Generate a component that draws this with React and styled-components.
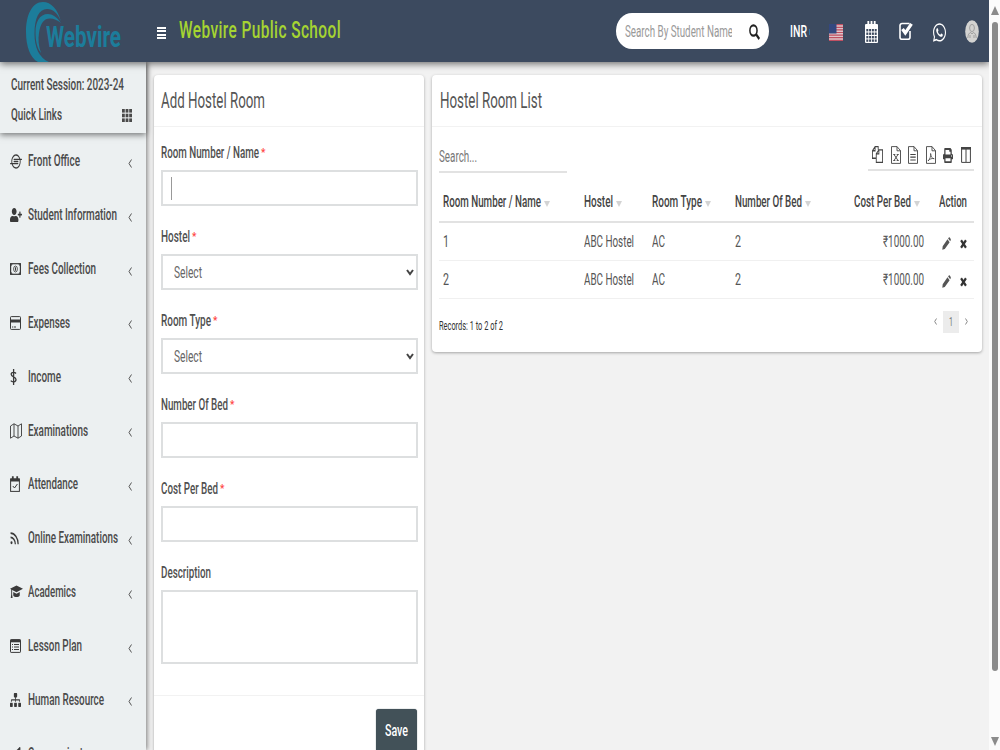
import React, { useLayoutEffect, useRef, useState } from "react";
import styled, { createGlobalStyle } from "styled-components";
import {
  FaIoxhost, FaUserPlus, FaSitemap, FaBullhorn, FaWhatsapp, FaPrint,
} from "react-icons/fa";

const GlobalStyle = createGlobalStyle`
  * { box-sizing: border-box; }
  html, body { margin: 0; overflow: hidden; background: #f2f2f2; }
  body { font-family: Roboto, "Liberation Sans", sans-serif; font-size: 16px; line-height: 20px; color: #444; }
`;

/* Text condensed to a given width */
const FitBox = styled.span`
  display: inline-block;
  flex: none;
  white-space: nowrap;
  width: ${(p) => p.$w}px;
`;
const FitInner = styled.span`
  display: inline-block;
  transform-origin: 0 50%;
`;
function Fit({ w, children }) {
  const ref = useRef(null);
  const [scale, setScale] = useState(0.75);
  useLayoutEffect(() => {
    setScale(w / ref.current.getBoundingClientRect().width * scale);
  }, [w, children]);
  return (
    <FitBox $w={w}>
      <FitInner ref={ref} style={{ transform: `scaleX(${scale})` }}>{children}</FitInner>
    </FitBox>
  );
}

const Shell = styled.div`
  display: grid;
  grid-template-columns: 989px 11px;
  width: 1000px;
  height: 750px;
  overflow: hidden;
`;
const Main = styled.div`
  display: flex;
  flex-direction: column;
  height: 750px;
  overflow: hidden;
`;
const Header = styled.header`
  display: flex;
  align-items: center;
  flex: none;
  height: 62px;
  background: #3c4a5f;
  box-shadow: 0 2px 7px rgba(0, 0, 0, 0.55);
  position: relative;
  z-index: 3;
`;
const Brand = styled.div`
  width: 157px;
  height: 62px;
  flex: none;
  padding-left: 24px;
  display: flex;
`;
const Swirl = styled.svg`
  display: block;
  width: 40px;
  height: 62px;
  flex: none;
`;
const BrandName = styled.span`
  margin: 18px 0 0 -18px;
  font-size: 30px;
  line-height: 38px;
  font-weight: 700;
  color: #1c7d9b;
`;
const Burger = styled.div`
  display: flex;
  flex-direction: column;
  gap: 1.4px;
  width: 9px;
  margin-top: 4px;
`;
const Bar = styled.i`
  height: 2px;
  background: #fff;
`;
const Title = styled.h1`
  margin: 0 0 0 13px;
  font-size: 23px;
  line-height: 30px;
  font-weight: 500;
  color: #a5d432;
  letter-spacing: 0.6px;
  flex: 1;
`;
const SearchPill = styled.div`
  display: flex;
  align-items: center;
  justify-content: space-between;
  width: 153px;
  height: 36px;
  margin-right: 21px;
  padding: 2px 9px 0 9px;
  border-radius: 16px/18px;
  background: #fff;
  color: #999;
`;
const Clip = styled.div`
  width: 107px;
  overflow: hidden;
  display: flex;
`;
const Currency = styled.div`
  color: #fff;
  width: 39px;
  padding-top: 2px;
  font-weight: 500;
  display: flex;
  align-items: center;
  gap: 2px;
  &::after { content: ""; width: 1px; height: 6px; background: #2f6f9f; }
`;
const HeaderIcons = styled.div`
  display: grid;
  grid-template-columns: 36px 34px 34px 32px 24px;
  align-items: center;
  color: #fff;
  width: 160px;
`;
const Glyph = styled.svg`
  display: block;
  flex: none;
  width: ${(p) => p.$w}px;
  height: ${(p) => p.$h}px;
  margin-top: ${(p) => p.$t || 0}px;
`;
const Icon = ({ of, w, h, t }) => <Glyph as={of} $w={w} $h={h} $t={t} preserveAspectRatio="none" />;

const Body = styled.div`
  display: flex;
  flex: 1;
  min-height: 0;
`;
const Sidebar = styled.aside`
  flex: none;
  width: 146px;
  margin-right: 1px;
  background: #ecf0f1;
  box-shadow: 1px 0 5px rgba(0, 0, 0, 0.5);
  position: relative;
  z-index: 2;
  color: #4a4a4a;
  font-weight: 500;
`;
const Session = styled.div`
  height: 71px;
  padding: 13px 14px 0 11px;
  display: flex;
  flex-direction: column;
  gap: 10px;
  background: #ecf0f1;
  box-shadow: 0 2px 6px rgba(0, 0, 0, 0.5);
`;
const Spread = styled.div`
  display: flex;
  align-items: center;
  justify-content: space-between;
`;
const MenuItem = styled.div`
  display: flex;
  align-items: center;
  height: 53.85px;
  padding: 3px 13px 0 10px;
`;
const MenuIcon = styled.span`
  width: 18px;
  display: flex;
  flex: none;
  color: #3a3a3a;
`;
const Chevron = styled.svg`
  width: 4px;
  height: 9px;
  margin: 4px 1px 0 auto;
  fill: none;
  stroke: #555;
`;
const Content = styled.main`
  flex: 1;
  display: flex;
  align-items: flex-start;
  gap: 8px;
  padding: 13px 7px 0 7px;
`;
const Card = styled.section`
  width: ${(p) => p.$w}px;
  height: ${(p) => p.$h}px;
  flex: none;
  background: #fff;
  border-radius: 4px;
  box-shadow: 0 1px 3px rgba(0, 0, 0, 0.32);
`;
const CardHead = styled.h2`
  margin: 0;
  height: 52px;
  padding: 11px 7px 9px ${(p) => p.$l || 7}px;
  font-size: 21.5px;
  line-height: 30px;
  font-weight: 400;
  color: #555;
  border-bottom: 1px solid #f2f2f2;
`;
const Form = styled.div`
  display: flex;
  flex-direction: column;
  gap: 21px;
  height: 569px;
  padding: 16px 7px 0;
  border-bottom: 1px solid #f2f2f2;
`;
const Field = styled.label`
  display: flex;
  flex-direction: column;
  gap: 7px;
`;
const LabelRow = styled.span`
  display: flex;
  height: 20px;
  font-weight: 500;
  color: #505050;
`;
const Star = styled.span`
  margin-left: 2px;
  color: #f44;
  font-size: 10px;
  line-height: 19px;
`;
const Control = styled.span`
  display: flex;
  align-items: center;
  justify-content: space-between;
  width: 256.5px;
  height: ${(p) => p.$h || 36}px;
  padding: 2px 2px 0 ${(p) => p.$pad || 8}px;
  border: 2px solid #dddfe0;
  color: #666;
`;
const Caret = styled.i`
  width: 1.5px;
  height: 23px;
  margin-top: -1px;
  background: #999;
`;
const FormFoot = styled.div`
  display: flex;
  justify-content: flex-end;
  padding: 13px 7px;
`;
const Save = styled.button`
  width: 41px;
  height: 43px;
  padding: 0;
  border: 0;
  border-radius: 3px;
  background: #425158;
  color: #fff;
  font: 500 16px/20px Roboto, sans-serif;
  box-shadow: 0 0 1px #425158;
`;
const Tools = styled.div`
  display: flex;
  justify-content: space-between;
  align-items: flex-start;
  padding: 18px 8px 0 7px;
`;
const TableSearch = styled.div`
  width: 128px;
  height: 28px;
  padding-top: 2px;
  border-bottom: 2px solid #e2e2e2;
  color: #777;
`;
const Exports = styled.div`
  display: grid;
  grid-template-columns: 19px 17px 18px 17px 18px 12px;
  width: 106px;
  height: 26px;
  padding: 1px 0 0 4px;
  border-bottom: 2px solid #e2e2e2;
  color: #444;
`;
const Row = styled.div`
  display: grid;
  grid-template-columns: 144px 68px 83px 105px 84px 50px;
  align-items: center;
  height: ${(p) => p.$h}px;
  margin: 0 8px 0 7px;
  padding-left: 1px;
  padding-top: ${(p) => (p.$head ? 10 : 2)}px;
  border-bottom: ${(p) => (p.$head ? "2px solid #e2e2e2" : "1px solid #f0f0f0")};
  color: ${(p) => (p.$head ? "#444" : "#555")};
  font-weight: ${(p) => (p.$head ? 500 : 400)};
`;
const Cell = styled.span`
  display: flex;
  align-items: center;
  padding-left: ${(p) => p.$l || 0}px;
  padding-right: ${(p) => p.$r || 0}px;
  justify-content: ${(p) => (p.$end ? "flex-end" : "flex-start")};
`;
const Sort = styled.i`
  width: 0;
  height: 0;
  margin: 3px 0 0 3px;
  border: 3.5px solid transparent;
  border-top: 6px solid #d3d3d3;
  border-bottom: 0;
`;
const ListFoot = styled(Spread)`
  align-items: flex-start;
  padding: 12px 14px 0 7px;
  font-size: 12.5px;
`;
const Records = styled.div`
  padding-top: 5px;
  color: #333;
`;
const Pager = styled.div`
  display: flex;
  align-items: center;
  gap: 6px;
  color: #888;
`;
const Page = styled.span`
  width: 16px;
  height: 22px;
  background: #ececec;
  text-align: center;
  line-height: 22px;
  color: #777;
`;
const Step = styled.svg`
  width: 3px;
  height: 7px;
  fill: none;
  stroke: #888;
`;
const Scroll = styled.div`
  display: flex;
  flex-direction: column;
  align-items: center;
  height: 750px;
  padding: 6px 0 4px;
  background: #fbfbfb;
`;
const Thumb = styled.div`
  width: 6px;
  height: 649px;
  margin: 7px 0 auto 0;
  border-radius: 3px;
  background: #8b8b8b;
`;
const Arrow = styled.i`
  border: 4px solid transparent;
  border-${(p) => (p.$up ? "top" : "bottom")}: 0;
  border-${(p) => (p.$up ? "bottom" : "top")}: 9px solid #8b8b8b;
`;

const Line = (p) => <svg fill="none" stroke="currentColor" {...p} />;
const Rss = (p) => (
  <Line viewBox="0 0 16 16" {...p}>
    <path d="M1 1.5a13.5 13.5 0 0 1 13.5 13.5M1 6.5a8.5 8.5 0 0 1 8.5 8.5" strokeWidth="2.2" />
    <circle cx="2.7" cy="13.3" r="1.8" fill="currentColor" stroke="none" />
  </Line>
);
const Grid = (p) => (
  <svg viewBox="0 0 10 13" fill="currentColor" {...p}>
    {[0, 3.6, 7.2].map((x) => [0, 4.7, 9.4].map((y) => <rect key={x + "-" + y} x={x} y={y} width="2.8" height="3.6" />))}
  </svg>
);
const Money = (p) => (
  <Line viewBox="0 0 11 12" {...p}>
    <rect x=".6" y=".7" width="9.8" height="10.600" strokeWidth="1.2" />
    <ellipse cx="5.500" cy="6" rx="1.900" ry="3" strokeWidth=".8" />
    <path d="M5.500 4.300v3.400" strokeWidth="1" />
    <path d="M1 3V1h1.500M8.500 1H10v2M1 9v2h1.500M8.500 11H10V9" strokeWidth="1" />
  </Line>
);
const CreditCard = (p) => (
  <Line viewBox="0 0 11 14" {...p}>
    <rect x=".5" y=".6" width="10" height="12.800" rx=".8" strokeWidth="1" />
    <path d="M.5 5h10" strokeWidth="3" />
    <path d="M2 11h1.300M4 11h2" strokeWidth="1" />
  </Line>
);
const Dollar = (p) => (
  <Line viewBox="0 0 7 16" {...p}>
    <path d="M6 4.500C5 3.200 1.200 2.700 1.200 5.300C1.200 8.300 6 7.300 6 10.500C6 13.500 2 13.300.8 11.700M3.600 0v16" strokeWidth="1.300" />
  </Line>
);
const MapIcon = (p) => (
  <Line viewBox="0 0 12 16" {...p}>
    <path d="M.5 3L4 .8L8 3L11.500.8V13L8 15.200L4 13L.5 15.200zM4 .8V13M8 3v12.200" strokeWidth=".9" />
  </Line>
);
const Attend = (p) => (
  <Line viewBox="0 0 10 16" {...p}>
    <rect x=".6" y="3" width="8.800" height="12.400" strokeWidth="1" />
    <path d="M.5 4h9" strokeWidth="3" />
    <path d="M2.800.3v3M7.200.3v3" strokeWidth="1.800" />
    <path d="M2.800 10l1.700 2L7.400 8" strokeWidth="1" />
  </Line>
);
const Cap = (p) => (
  <svg viewBox="0 0 14 14" fill="currentColor" {...p}>
    <path d="M7 .5L14 3.800L7 7.200L2.300 5V9.500L2.800 13H.8L1.300 9.500V4.500L0 3.800z" />
    <path d="M3.500 7L7 8.700L10.500 7V10.500C9.500 12.500 4.500 12.500 3.500 10.500z" />
  </svg>
);
const ListAlt = (p) => (
  <Line viewBox="0 0 11 14" {...p}>
    <rect x=".5" y=".6" width="10" height="12.800" rx=".6" strokeWidth="1" />
    <path d="M.5 2h10" strokeWidth="2.600" />
    <path d="M2 5.500h1M4 5.500h5M2 8h1M4 8h5M2 10.500h1M4 10.500h5" strokeWidth="1" />
  </Line>
);
const Copy = (p) => (
  <Line viewBox="0 0 16 16" strokeWidth="1.3" {...p}>
    <path d="M9 3.5V.6H4.5L.6 4.5v7H6M4.5.6v3.9H.6M15.4 3.6H10L6.2 7.4v8h9.2zM10 3.6v3.8H6.2" />
  </Line>
);
const sheet = "M.5.6H6L9.500 4.600V17.400H.5zM6 .6V4.800H9.500";
const FileX = (p) => (
  <Line viewBox="0 0 10 18" {...p}><path d={sheet} strokeWidth=".9" /><path d="M3 8.500L7 14.500M7 8.500L3 14.500M2.300 14.500h2M5.700 14.500h2M2.300 8.500h2M5.700 8.500h2" strokeWidth=".9" /></Line>
);
const FileText = (p) => (
  <Line viewBox="0 0 10 18" {...p}><path d={sheet} strokeWidth=".9" /><path d="M2.300 8.500h5.400M2.300 11.200h5.400M2.300 14h5.400" strokeWidth="1.200" /></Line>
);
const FilePdf = (p) => (
  <Line viewBox="0 0 10 18" {...p}><path d={sheet} strokeWidth=".9" /><path d="M2 15C4 13 5 10 4.600 7.500C5 11 6 12.500 8.200 12.700C6 12 3.500 13 2 15" strokeWidth=".8" /></Line>
);
const Columns = (p) => (
  <Line viewBox="0 0 10 16" {...p}><path d="M.6 1V15.400H9.400V1M5 1v14" strokeWidth="1" /><path d="M0 1.300h10" strokeWidth="2.600" /></Line>
);
const Pencil = (p) => (
  <svg viewBox="0 0 9 13" fill="currentColor" {...p}>
    <path d="M5.500 2.300L7.600 5.200L2.800 12L.3 12.800L.7 9.200zM6.100 1.500L6.800.5Q7.300 0 7.800.6L8.700 2Q9 2.600 8.700 3.300L8.200 4.300z" />
  </svg>
);
const Magnify = (p) => (
  <svg viewBox="0 0 16 16" fill="none" stroke="#222" {...p}>
    <circle cx="6.5" cy="6.5" r="5.2" strokeWidth="2.2" />
    <path d="M10.3 10.3L15 15" strokeWidth="2.8" />
  </svg>
);
const Calendar = (p) => (
  <svg viewBox="0 0 13 22" {...p}>
    <rect y="3" width="13" height="19" rx="1" fill="#fff" />
    <path d="M3.3 0v6M6.5 0v6M9.7 0v6" stroke="#fff" strokeWidth="1.8" />
    <g fill="#3c4a5f">
      {[1.3, 4.1, 6.9, 9.7].map((x) => [8, 11.5, 15, 18.4].map((y) => <rect key={x + "-" + y} x={x} y={y} width="2" height="2.4" />))}
    </g>
  </svg>
);
const Check = (p) => (
  <svg viewBox="0 0 14 20" fill="none" stroke="#fff" {...p}>
    <path d="M11 10v6.200a2 2 0 0 1-2 2H3a2 2 0 0 1-2-2V4.500a2 2 0 0 1 2-2h7.500" strokeWidth="1.6" />
    <path d="M3.500 8L6.300 12L12.500 2.800" strokeWidth="3.200" />
  </svg>
);
const Flag = (p) => (
  <svg viewBox="0 0 14 17" {...p}>
    <rect width="14" height="17" fill="#dfc3c9" />
    <path d="M0 .7h14M0 3.300h14M0 5.900h14M0 8.500h14M0 11.100h14M0 13.700h14M0 16.300h14" stroke="#c05062" strokeWidth="1.200" />
    <rect width="7.500" height="9.500" fill="#34487f" />
  </svg>
);
const Avatar = (p) => (
  <svg viewBox="0 0 14 23" {...p}>
    <ellipse cx="7" cy="11.500" rx="6.800" ry="11.300" fill="#d3d3d1" />
    <g fill="none" stroke="#999" strokeWidth=".9">
      <ellipse cx="7" cy="8" rx="2.400" ry="3.600" />
      <path d="M2.800 18q.3-5 3-5.500l1.200 1.500 1.200-1.500q2.700.5 3 5.500M5 15v3M9 15v3" />
    </g>
  </svg>
);
const Cross = (p) => (
  <svg viewBox="0 0 8 10" {...p}>
    <path d="M1.200 1.200L6.800 8.800M6.800 1.200L1.200 8.800" stroke="#333" strokeWidth="2.500" />
  </svg>
);

const menu = [
  ["Front Office", 52, FaIoxhost, 12, 15],
  ["Student Information", 89, FaUserPlus, 12, 14],
  ["Fees Collection", 68, Money, 11, 12],
  ["Expenses", 42, CreditCard, 11, 14],
  ["Income", 33, Dollar, 7, 16],
  ["Examinations", 60, MapIcon, 12, 16],
  ["Attendance", 50, Attend, 10, 16],
  ["Online Examinations", 90, Rss, 9, 13],
  ["Academics", 48, Cap, 13, 14],
  ["Lesson Plan", 54, ListAlt, 11, 14],
  ["Human Resource", 76, FaSitemap, 11, 14],
  ["Communicate", 60, FaBullhorn, 11, 14],
];
const fields = [
  ["Room Number / Name", 98, "text"],
  ["Hostel", 29, "select"],
  ["Room Type", 50, "select"],
  ["Number Of Bed", 67, ""],
  ["Cost Per Bed", 57, ""],
];

export default function App() {
  return (
    <Shell>
      <GlobalStyle />
      <Main>
        <Header>
          <Brand>
            <Swirl viewBox="0 0 40 62" fill="#1c7d9b">
              <path d="M37 22C34 9 27 2 19 2C8 2 2 15 2 32C2 46 6 58 14 62H25C15 58 10.500 47 10.500 34C10.500 18 15 9 23 9C29 9 34 13 37 22Z" />
              <path d="M37 23C33 17 28 14 24 14C15.500 14 11.500 22 11.500 32C11.500 41 13 48 17 53C14.500 46 14 39 15 33C16.500 23 20 18.500 26 18.500C30 18.500 33 20 37 23Z" />
            </Swirl>
            <BrandName><Fit w={75}>Webvire</Fit></BrandName>
          </Brand>
          <Burger><Bar /><Bar /><Bar /><Bar /></Burger>
          <Title><Fit w={162}>Webvire Public School</Fit></Title>
          <SearchPill>
            <Clip><Fit w={108}>Search By Student Name</Fit></Clip>
            <Icon of={Magnify} w={11} h={16} />
          </SearchPill>
          <Currency><Fit w={17}>INR</Fit></Currency>
          <HeaderIcons>
            <Icon of={Flag} w={14} h={17} t={3} />
            <Icon of={Calendar} w={13} h={22} t={1} />
            <Icon of={Check} w={14} h={20} />
            <Icon of={FaWhatsapp} w={13} h={21} t={2} />
            <Icon of={Avatar} w={14} h={23} />
          </HeaderIcons>
        </Header>
        <Body>
          <Sidebar>
            <Session>
              <Fit w={113}>Current Session: 2023-24</Fit>
              <Spread>
                <Fit w={51}>Quick Links</Fit>
                <Icon of={Grid} w={10} h={13} t={1} />
              </Spread>
            </Session>
            {menu.map(([name, w, icon, iw, ih]) => (
              <MenuItem key={name}>
                <MenuIcon><Icon of={icon} w={iw} h={ih} /></MenuIcon>
                <Fit w={w}>{name}</Fit>
                <Chevron viewBox="0 0 4 9"><path d="M3.500.5L1 4.500L3.500 8.500" /></Chevron>
              </MenuItem>
            ))}
          </Sidebar>
          <Content>
            <Card $w={270} $h={690}>
              <CardHead><Fit w={104}>Add Hostel Room</Fit></CardHead>
              <Form>
                {fields.map(([name, w, kind]) => (
                  <Field key={name}>
                    <LabelRow><Fit w={w}>{name}</Fit><Star>*</Star></LabelRow>
                    <Control $pad={kind === "select" ? 10.5 : 7.5}>
                      {kind === "text" && <Caret />}
                      {kind === "select" && (
                        <>
                          <Fit w={28}>Select</Fit>
                          <Glyph $w={8} $h={7} $t={-2} viewBox="0 0 8 7" fill="none" stroke="#444" strokeWidth="2"><path d="M1 1L4 5L7 1" /></Glyph>
                        </>
                      )}
                    </Control>
                  </Field>
                ))}
                <Field>
                  <LabelRow><Fit w={50}>Description</Fit></LabelRow>
                  <Control $h={74} />
                </Field>
              </Form>
              <FormFoot><Save><Fit w={23}>Save</Fit></Save></FormFoot>
            </Card>
            <Card $w={550} $h={277}>
              <CardHead $l={7.5}><Fit w={102}>Hostel Room List</Fit></CardHead>
              <Tools>
                <TableSearch><Fit w={38}>Search...</Fit></TableSearch>
                <Exports>
                  <Icon of={Copy} w={11} h={17} />
                  <Icon of={FileX} w={10} h={18} />
                  <Icon of={FileText} w={10} h={18} />
                  <Icon of={FilePdf} w={10} h={18} />
                  <Icon of={FaPrint} w={10} h={15} t={2} />
                  <Icon of={Columns} w={10} h={16} t={1} />
                </Exports>
              </Tools>
              <Row $h={50} $head>
                <Cell $l={3}><Fit w={98}>Room Number / Name</Fit><Sort /></Cell>
                <Cell><Fit w={29}>Hostel</Fit><Sort /></Cell>
                <Cell><Fit w={50}>Room Type</Fit><Sort /></Cell>
                <Cell><Fit w={67}>Number Of Bed</Fit><Sort /></Cell>
                <Cell $end $r={4}><Fit w={57}>Cost Per Bed</Fit><Sort /></Cell>
                <Cell $end $r={7}><Fit w={28}>Action</Fit></Cell>
              </Row>
              {["1", "2"].map((n, i) => (
                <Row key={n} $h={i ? 38 : 37.5}>
                  <Cell $l={3}><Fit w={6}>{n}</Fit></Cell>
                  <Cell><Fit w={50}>ABC Hostel</Fit></Cell>
                  <Cell><Fit w={13}>AC</Fit></Cell>
                  <Cell><Fit w={6}>2</Fit></Cell>
                  <Cell $end><Fit w={41}>₹1000.00</Fit></Cell>
                  <Cell $l={18}>
                    <Icon of={Pencil} w={9} h={13} t={3} />
                    <Cell $l={9}><Icon of={Cross} w={7} h={10} t={3} /></Cell>
                  </Cell>
                </Row>
              ))}
              <ListFoot>
                <Records><Fit w={64}>Records: 1 to 2 of 2</Fit></Records>
                <Pager>
                  <Step viewBox="0 0 3 7"><path d="M2.500.5L.7 3.500L2.500 6.500" /></Step>
                  <Page><Fit w={4}>1</Fit></Page>
                  <Step viewBox="0 0 3 7"><path d="M.5.5L2.300 3.500L.5 6.500" /></Step>
                </Pager>
              </ListFoot>
            </Card>
          </Content>
        </Body>
      </Main>
      <Scroll><Arrow $up /><Thumb /><Arrow /></Scroll>
    </Shell>
  );
}
